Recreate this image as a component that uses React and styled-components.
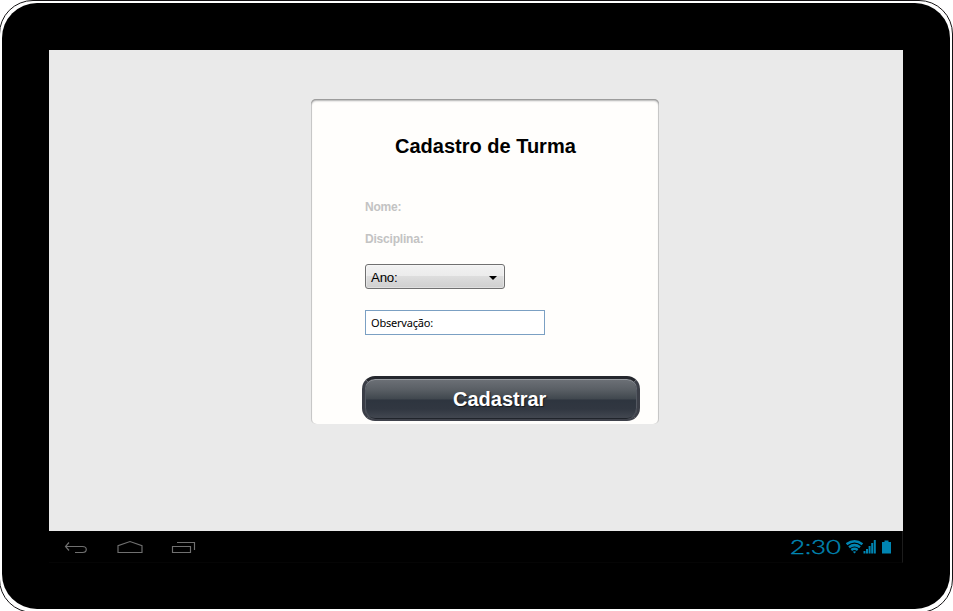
import React from "react";
import styled, { createGlobalStyle } from "styled-components";

const GlobalStyle = createGlobalStyle`
  *, *::before, *::after { box-sizing: border-box; }
  body { margin: 0; background: #fff; overflow: hidden; }
`;

const Viewport = styled.div`
  width: 953px;
  height: 611px;
  overflow: hidden;
`;

const Bezel = styled.div`
  width: 954px;
  height: 613px;
  margin-left: -1px;
  padding: 2px;
  border: 1px solid #151315;
  border-radius: 34px;
  background: #fff;
  font-family: "Liberation Sans", Arial, sans-serif;
`;

const Body = styled.div`
  width: 948px;
  height: 606px;
  padding: 47px 0 0 47px;
  border-radius: 35px;
  background: #000;
`;

const Screen = styled.main`
  width: 854px;
  height: 513px;
  display: flex;
  flex-direction: column;
  border-right: 1px solid #1c1c1c;
  border-bottom: 1px solid #050505;
`;

const Workspace = styled.section`
  width: 854px;
  height: 481px;
  padding: 49px 0 0 262px;
  background: #eaeaea;
`;

const Card = styled.form`
  width: 348px;
  height: 325px;
  display: flex;
  flex-direction: column;
  align-items: flex-start;
  padding: 0 0 0 54px;
  border-radius: 5px;
  background: #fffefc;
  box-shadow: inset 0 1px 1px #999, inset 0 2px 2px #b8b8b8, inset 1px 0 0 #d6d6d6, inset -1px 0 0 #d6d6d6;
`;

const Title = styled.h1`
  margin: 35px 0 0 30px;
  font-size: 20px;
  line-height: 24px;
  font-weight: 700;
  color: #000;
  white-space: nowrap;
`;

const FieldLabel = styled.label`
  height: 14px;
  margin-top: ${(p) => p.$gap}px;
  font-size: 12px;
  line-height: 14px;
  font-weight: 700;
  letter-spacing: -0.2px;
  color: #c3c3c3;
`;

const Select = styled.button`
  width: 140px;
  height: 25px;
  display: flex;
  align-items: center;
  justify-content: space-between;
  margin-top: 18px;
  padding: 2px 7px 0 5px;
  border: 1px solid #707070;
  border-radius: 3px;
  background: linear-gradient(#f2f2f2 0, #ebebeb 50%, #dddddd 50%, #cfcfcf 100%);
  box-shadow: inset 0 0 0 1px rgba(255, 255, 255, 0.35);
  font: 13.3px/16px "Liberation Sans", Arial, sans-serif;
  letter-spacing: -0.2px;
  color: #000;
`;

const Input = styled.div`
  width: 180px;
  height: 25px;
  display: flex;
  align-items: center;
  margin-top: 21px;
  padding: 1px 0 0 5px;
  border: 1px solid #7ba0c3;
  background: #fff;
  font: 11px/14px "Noto Sans", Tahoma, sans-serif;
  letter-spacing: -0.2px;
  color: #000;
`;

const Submit = styled.button`
  width: 278px;
  height: 45px;
  display: flex;
  margin: 41px 0 0 -3px;
  padding: 0;
  border: 3px solid;
  border-width: 3px 3px 2px;
  border-color: #25272d #3c3f48 #3f424b #3a3d46;
  border-radius: 13px;
  background: linear-gradient(#6d7177 0, #5b6066 25%, #41484f 49%, #2e353f 53%, #313741 75%, #444952 100%);
  background-clip: padding-box;
  background-color: #30333b;
  box-shadow: inset 0 1px 0 #969a9f, inset 1px 0 0 #535861, inset -1px 0 0 #535861, inset 0 -1px 0 #20242b;
`;

const SubmitText = styled.span`
  margin: 8px 0 0 88px;
  font: 700 20px/24px "Liberation Sans", Arial, sans-serif;
  color: #fff;
  text-shadow: 1px 1px 1px #15191e;
`;

const SystemBar = styled.footer`
  height: 31px;
  display: flex;
  justify-content: space-between;
  background: #000;
`;

const NavKeys = styled.nav`
  display: flex;
  gap: 26px;
  padding: 6px 0 0 13px;
`;

const Status = styled.div`
  width: 112px;
  display: flex;
  color: #0085b2;
`;

const Clock = styled.time`
  width: 56px;
  height: 20px;
  margin-top: 6px;
  font: 300 19px/20px Lato, "Open Sans", sans-serif;
  -webkit-text-stroke: 0.4px currentColor;
  white-space: nowrap;
  transform: scaleX(1.35);
  transform-origin: left;
`;

function NavIcon({ d }) {
  return (
    <svg width="28" height="22" viewBox="0 0 28 22" fill="none" stroke="#707070" strokeWidth="1.15">
      <path d={d} />
    </svg>
  );
}

function StatusIcons() {
  return (
    <svg width="48" height="24" viewBox="0 0 48 24" fill="currentColor">
      <g fill="none" stroke="currentColor" strokeWidth="2.5">
        <path d="M0.6 13.2Q8.5 7.4 16.4 13.2" />
        <path d="M3 16.2Q8.5 12 14 16.2" />
        <path d="M5.3 19Q8.5 16.6 11.7 19" />
      </g>
      <path d="M6.8 20.7Q8.5 19.6 10.2 20.7L8.5 22.5Z" />
      <path d="M17.5 20h2v2.5h-2zM20 18h2v4.5h-2zM22.6 15h2v7.5h-2zM25.2 12h2v10.5h-2zM27.8 9h2v13.5h-2z" />
      <path d="M36 11h2.5V9.5h4V11H45v11.5h-9z" />
    </svg>
  );
}

export default function App() {
  return (
    <>
      <GlobalStyle />
      <Viewport>
        <Bezel>
          <Body>
            <Screen>
              <Workspace>
                <Card>
                  <Title>Cadastro de Turma</Title>
                  <FieldLabel $gap={42}>Nome:</FieldLabel>
                  <FieldLabel $gap={18}>Disciplina:</FieldLabel>
                  <Select type="button">
                    Ano:
                    <svg width="8" height="4" viewBox="0 0 8 4">
                      <path d="M0 0H8L4 4Z" fill="#000" />
                    </svg>
                  </Select>
                  <Input>Observação:</Input>
                  <Submit type="button">
                    <SubmitText>Cadastrar</SubmitText>
                  </Submit>
                </Card>
              </Workspace>
              <SystemBar>
                <NavKeys>
                  <NavIcon d="M7 5.5L3.5 9.5L7 13.5M3.5 9.5H20.5C25.5 9.5 25.5 15.5 20.5 15.5H13" />
                  <NavIcon d="M2 15.5V8.7L14 4.5L26 8.7V15.5Z" />
                  <NavIcon d="M2.5 9.5H20.5V15.5H2.5ZM7 5.5H24.5V13" />
                </NavKeys>
                <Status>
                  <Clock>2:30</Clock>
                  <StatusIcons />
                </Status>
              </SystemBar>
            </Screen>
          </Body>
        </Bezel>
      </Viewport>
    </>
  );
}
